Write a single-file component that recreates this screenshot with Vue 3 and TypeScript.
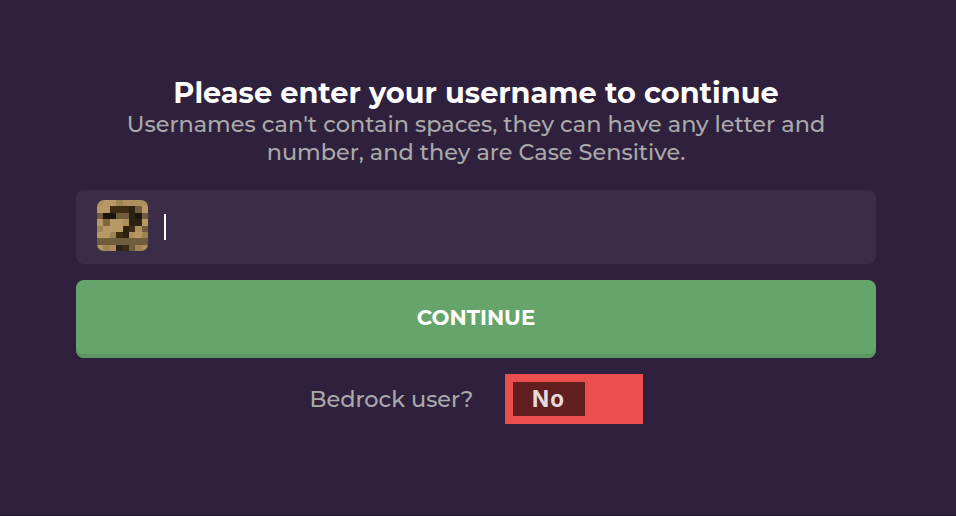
<script setup lang="ts">
import { ref } from 'vue'

const username = ref<string>('')
const bedrock = ref<boolean>(false)

const palette: Record<string, string> = {
  t: '#b69965',
  u: '#ae905e',
  o: '#9c8552',
  m: '#6f5d3d',
  n: '#7b663f',
  d: '#3e2b16',
  e: '#2d2112',
  b: '#1c150d',
}

const avatar: string[] = [
  'uttouuuu',
  'ttdddemt',
  'mbbmmebm',
  'tnttueet',
  'otttedum',
  'ttodeuto',
  'mmmmmmmm',
  'touedmou',
]
</script>

<template>
  <main class="page">
    <header class="intro">
      <h1>Please enter your username to continue</h1>
      <p>
        Usernames can't contain spaces, they can have any letter and<br />
        number, and they are Case Sensitive.
      </p>
    </header>
    <div class="field">
      <svg class="avatar" viewBox="0 0 8 8" preserveAspectRatio="none" shape-rendering="crispEdges">
        <template v-for="(row, y) in avatar" :key="y">
          <rect
            v-for="(cell, x) in row.split('')"
            :key="x"
            :x="x"
            :y="y"
            width="1"
            height="1"
            :fill="palette[cell]"
          />
        </template>
      </svg>
      <span class="value">{{ username }}</span>
      <span class="caret"></span>
    </div>
    <button class="continue" type="button">CONTINUE</button>
    <div class="bedrock">
      <span class="label">Bedrock user?</span>
      <button class="toggle" type="button" @click="bedrock = !bedrock">
        <span class="knob">{{ bedrock ? 'Yes' : 'No' }}</span>
      </button>
    </div>
  </main>
</template>

<style>
body {
  margin: 0;
  background: #2f203d;
}
</style>

<style scoped>
.page {
  box-sizing: border-box;
  height: 516px;
  padding: 75px 80px 0 76px;
  background: #2f203d;
  border-bottom: 1px solid #1d1228;
  font-family: Montserrat, Inter, sans-serif;
  overflow: hidden;
}
.intro {
  height: 115px;
  text-align: center;
  white-space: nowrap;
}
h1 {
  margin: 0;
  font-size: 28.8px;
  line-height: 35px;
  font-weight: 700;
  color: #fff;
}
p {
  margin: 0;
  font-size: 22.4px;
  line-height: 28px;
  font-weight: 500;
  color: #aaa;
}
.field {
  box-sizing: border-box;
  display: flex;
  align-items: center;
  height: 74px;
  padding: 0 21px 3px;
  border-radius: 8px;
  background: #3b2d47;
}
.avatar {
  width: 51px;
  height: 51px;
  border-radius: 7px;
}
.value {
  margin-left: 16px;
}
.caret {
  width: 2px;
  height: 26px;
  margin-top: 3px;
  background: #fff;
}
.continue {
  display: block;
  width: 100%;
  height: 78px;
  margin: 16px 0;
  padding: 0 0 4px;
  border: 0;
  border-radius: 8px;
  background: #65a46b;
  box-shadow: inset 0 -4px #5d9762;
  font: inherit;
  font-size: 21.3px;
  font-weight: 700;
  color: #fff;
}
.bedrock {
  display: flex;
  align-items: center;
  justify-content: center;
  gap: 32px;
}
.label {
  width: 163px;
  font-size: 22.4px;
  font-weight: 500;
  color: #aaa;
  white-space: nowrap;
}
.toggle {
  display: flex;
  box-sizing: border-box;
  width: 138px;
  height: 50px;
  padding: 8px;
  border: 0;
  background: #eb4f4d;
}
.knob {
  width: 72px;
  height: 34px;
  background: #621f20;
  font: 700 22.4px/33px Inter, sans-serif;
  letter-spacing: 1px;
  color: #e5dddd;
}
</style>
